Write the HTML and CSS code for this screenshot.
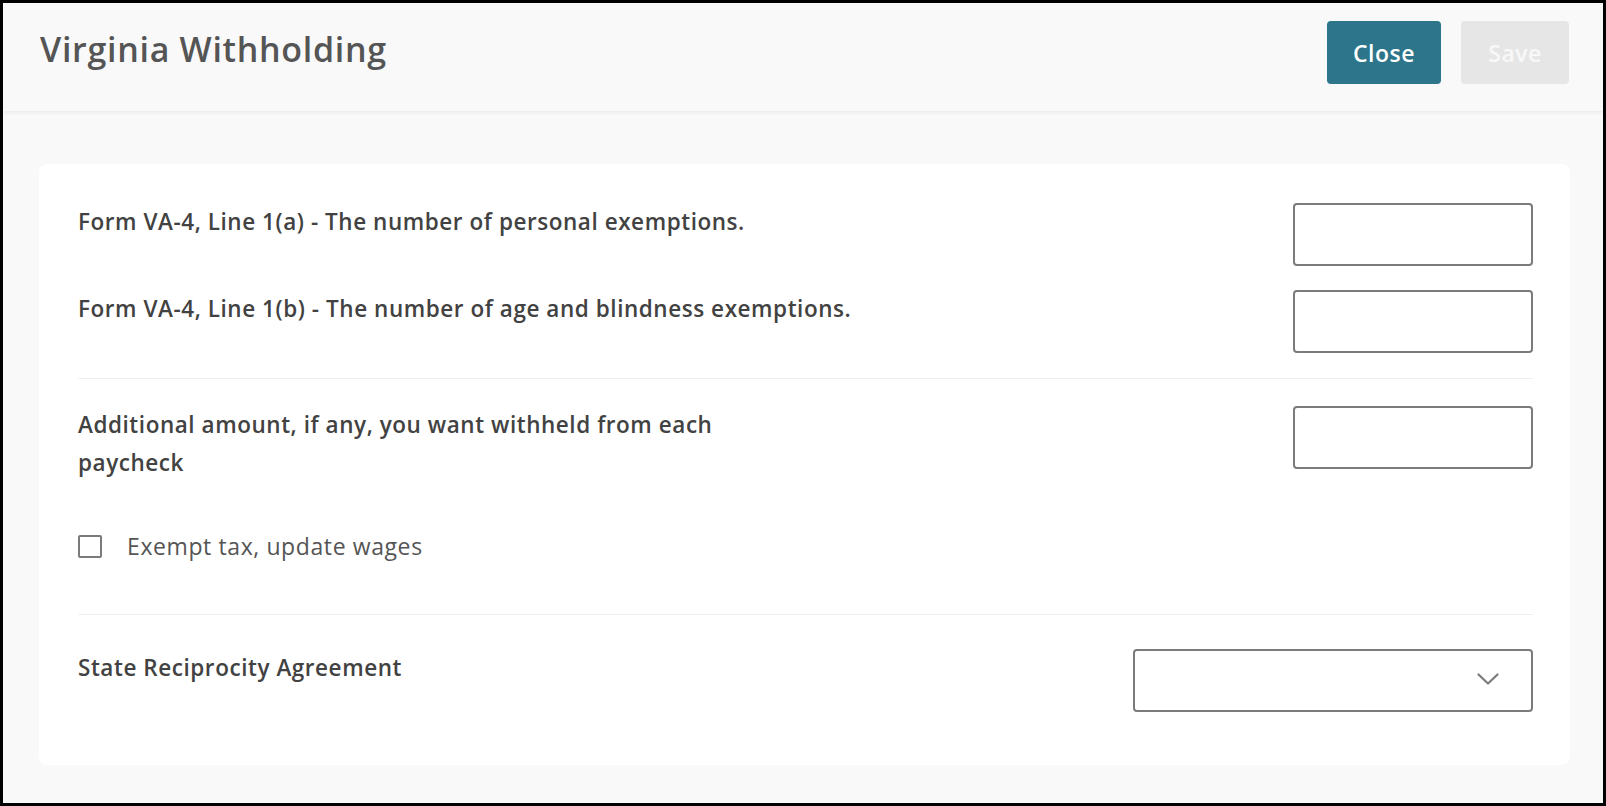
FILE: index.html
```html
<!DOCTYPE html>
<html lang="en">
<head>
    <meta charset="UTF-8">
    <meta name="viewport" content="width=device-width, initial-scale=1.0">
    <title>Virginia Withholding</title>
    <link rel="stylesheet" href="styles.css">
</head>
<body>
    <div class="page">
        <header class="topbar">
            <h1>Virginia Withholding</h1>
            <div class="actions">
                <button type="button" class="btn btn-primary">Close</button>
                <button type="button" class="btn btn-disabled" disabled>Save</button>
            </div>
        </header>

        <main class="content">
            <form class="card">
                <div class="group">
                    <div class="field">
                        <label for="personalEx">Form VA-4, Line 1(a) - The number of personal exemptions.</label>
                        <input type="text" id="personalEx" class="text-input">
                    </div>
                    <div class="field">
                        <label for="ageEx">Form VA-4, Line 1(b) - The number of age and blindness exemptions.</label>
                        <input type="text" id="ageEx" class="text-input">
                    </div>
                </div>

                <div class="group">
                    <div class="field">
                        <label for="additional" class="narrow">Additional amount, if any, you want withheld from each paycheck</label>
                        <input type="text" id="additional" class="text-input">
                    </div>
                    <label class="check">
                        <input type="checkbox" id="exempt">
                        <span>Exempt tax, update wages</span>
                    </label>
                </div>

                <div class="group group-last">
                    <div class="field">
                        <label for="reciprocity">State Reciprocity Agreement</label>
                        <div class="select-wrap">
                            <select id="reciprocity">
                                <option value=""></option>
                            </select>
                            <svg class="chevron" width="22" height="13" viewBox="0 0 22 13">
                                <path d="M1.5 1.5 L11 10.5 L20.5 1.5" fill="none" stroke="#7b7b7b" stroke-width="2.2" stroke-linecap="round" stroke-linejoin="round"/>
                            </svg>
                        </div>
                    </div>
                </div>
            </form>
        </main>
    </div>
</body>
</html>
```

FILE: styles.css
```css
html, body {
    margin: 0;
    padding: 0;
}
body {
    font-family: "Open Sans", Arial, sans-serif;
    background-color: #000;
}
.page {
    box-sizing: border-box;
    width: 1606px;
    height: 806px;
    border: 3px solid #000;
    background-color: #f9f9f9;
    display: flex;
    flex-direction: column;
}
.topbar {
    flex-shrink: 0;
    height: 108px;
    box-sizing: border-box;
    padding: 18px 34px 0 37px;
    display: flex;
    align-items: flex-start;
    justify-content: space-between;
    background-color: #f9f9f9;
    box-shadow: 0 2px 4px rgba(0,0,0,0.06);
    position: relative;
}
.topbar h1 {
    margin: 5px 0 0;
    font-size: 34px;
    font-weight: 600;
    color: #555;
    letter-spacing: 0.7px;
}
.actions {
    display: flex;
    gap: 20px;
}
.btn {
    height: 63px;
    padding: 0;
    border: none;
    border-radius: 4px;
    font-family: inherit;
    font-size: 23px;
    font-weight: 600;
    letter-spacing: 0.5px;
    cursor: pointer;
}
.btn-primary {
    width: 114px;
    background-color: #2c758a;
    color: #fff;
}
.btn-disabled {
    width: 108px;
    background-color: #e6e6e6;
    color: #f8f8f8;
    cursor: default;
}
.content {
    flex: 1;
    padding: 53px 33px 41px 36px;
}
.card {
    background-color: #fff;
    border-radius: 8px;
    padding: 39px 37px 53px 39px;
}
.group {
    display: flex;
    flex-direction: column;
    gap: 24px;
}
.group + .group {
    border-top: 1px solid #efefef;
    margin-top: 25px;
    padding-top: 27px;
}
.group-last {
    padding-top: 34px !important;
}
.field {
    display: flex;
    justify-content: space-between;
    align-items: flex-start;
}
.field label {
    font-size: 22.5px;
    font-weight: 600;
    line-height: 38px;
    letter-spacing: 0.55px;
    color: #424242;
}
.field label.narrow {
    max-width: 660px;
}
.text-input {
    box-sizing: border-box;
    width: 240px;
    height: 63px;
    border: 2px solid #7b7b7b;
    border-radius: 4px;
    padding: 0 14px;
    font-family: inherit;
    font-size: 20px;
}
.check {
    display: flex;
    align-items: center;
    gap: 25px;
    margin-top: 24px;
    margin-bottom: 27px;
    font-size: 23px;
    letter-spacing: 0.6px;
    color: #555;
}
.check input {
    appearance: none;
    -webkit-appearance: none;
    margin: 0;
    width: 24px;
    height: 23px;
    border: 2px solid #7b7b7b;
    border-radius: 2px;
    box-sizing: border-box;
}
.select-wrap {
    position: relative;
    width: 400px;
    height: 63px;
}
.select-wrap select {
    appearance: none;
    -webkit-appearance: none;
    box-sizing: border-box;
    width: 100%;
    height: 100%;
    border: 2px solid #7b7b7b;
    border-radius: 4px;
    background-color: #fff;
    padding: 0 50px 0 14px;
    font-family: inherit;
    font-size: 20px;
}
.chevron {
    position: absolute;
    right: 34px;
    top: 24px;
    pointer-events: none;
}
```
